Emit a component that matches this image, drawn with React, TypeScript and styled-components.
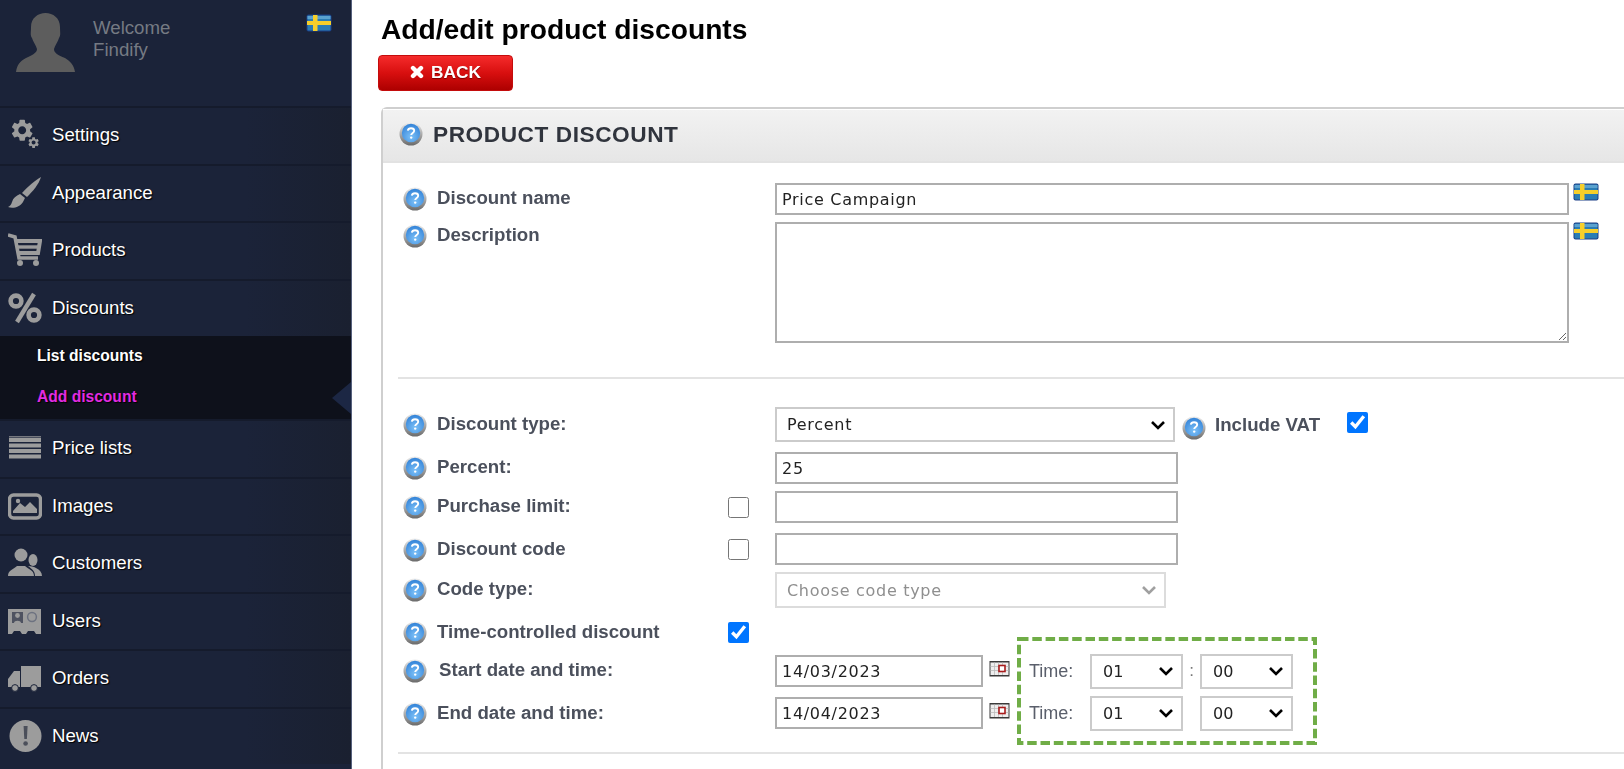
import React from "react";
import styled, { createGlobalStyle } from "styled-components";

const Global = createGlobalStyle`
  html, body { margin: 0; padding: 0; background: #fff; }
  body { font-family: "Liberation Sans", Arial, sans-serif; overflow: hidden; }
`;

const Page = styled.div`
  display: flex;
  width: 1624px;
  height: 769px;
  overflow: hidden;
  filter: blur(0.35px);
`;

const Sidebar = styled.aside`
  flex: 0 0 352px;
  box-sizing: border-box;
  height: 769px;
  background: #1b2339;
  border-right: 1px solid #56607c;
  overflow: hidden;
`;

const UserBox = styled.div`
  display: flex;
  align-items: flex-start;
  height: 106px;
  box-sizing: border-box;
  padding: 13px 19px 0 16px;
`;

const UserText = styled.div`
  margin: 4px 0 0 17px;
  font-size: 18.67px;
  line-height: 22px;
  color: #757a83;
`;

const SideFlag = styled.div`
  margin: 1px 0 0 auto;
  display: flex;
`;

const NavRow = styled.div`
  display: flex;
  align-items: center;
  box-sizing: border-box;
  height: 57.5px;
  padding: 0 0 1px 8px;
  border-top: 2px solid #151b2c;
  background: linear-gradient(90deg, #1b2339 0%, #1b2339 70%, #1a2030 100%);
  color: #fff;
  font-size: 18.67px;
  text-shadow: 1px 1px 1px #000;
`;

const NavIcon = styled.span`
  display: flex;
  flex: 0 0 44px;
  color: #9c9c9c;
`;

const SubMenu = styled.div`
  position: relative;
  box-sizing: border-box;
  height: 83px;
  background: #0e111b;
`;

const SubItem = styled.div<{ $active?: boolean }>`
  height: 41px;
  line-height: 39px;
  padding-left: 37px;
  font-size: 15.6px;
  font-weight: 700;
  color: ${(p) => (p.$active ? "#e22be2" : "#fff")};
  text-shadow: 1px 1px 1px #000;
`;

const ActiveArrow = styled.span`
  position: absolute;
  right: 0;
  top: 46px;
  width: 0;
  height: 0;
  border-top: 16px solid transparent;
  border-bottom: 16px solid transparent;
  border-right: 19px solid #1c2744;
`;

const Main = styled.main`
  flex: 1;
  min-width: 0;
  padding-left: 29px;
  overflow: hidden;
`;

const Title = styled.h1`
  margin: 0;
  height: 55px;
  box-sizing: border-box;
  padding-top: 13px;
  font-size: 28.2px;
  line-height: 32px;
  font-weight: 700;
  color: #000;
`;

const BackButton = styled.button`
  display: flex;
  align-items: center;
  justify-content: center;
  gap: 7px;
  width: 135px;
  height: 36px;
  margin: 0 0 16px -3px;
  padding: 0 0 2px;
  border: 1px solid #c40c0c;
  border-radius: 4px;
  background: linear-gradient(180deg, #f52b2b 0%, #d80f0f 50%, #ad0000 100%);
  color: #fff;
  font-family: inherit;
  font-size: 17.3px;
  font-weight: 700;
  text-shadow: 0 1px 1px #7a0000;
`;

const Panel = styled.section`
  width: 1400px;
  box-sizing: border-box;
  border: 2px solid #cfcfcf;
  border-right: 0;
  border-radius: 6px 0 0 0;
  height: 760px;
`;

const PanelHead = styled.div`
  display: flex;
  align-items: center;
  gap: 10px;
  box-sizing: border-box;
  height: 54px;
  padding: 0 0 3px 16px;
  border-top: 1px solid #fff;
  border-bottom: 2px solid #e2e2e2;
  background: linear-gradient(180deg, #f2f2f2 0%, #e6e6e6 100%);
`;

const PanelTitle = styled.h2`
  margin: 0;
  font-size: 22.67px;
  font-weight: 700;
  letter-spacing: 0.55px;
  color: #30343d;
`;

const PanelBody = styled.div`
  padding: 20px 0 0 20px;
`;

const Row = styled.div<{ $top?: number; $h: number }>`
  display: grid;
  grid-template-columns: 325px 47px 1fr;
  height: ${(p) => p.$h}px;
  margin-top: ${(p) => p.$top ?? 0}px;
`;

const LabelCell = styled.div<{ $top: number }>`
  display: flex;
  align-items: flex-start;
  gap: 10px;
  padding-top: ${(p) => p.$top}px;
`;

const Label = styled.span<{ $nudge?: number }>`
  margin-left: ${(p) => p.$nudge ?? 0}px;
  font-size: 18.67px;
  line-height: 22px;
  font-weight: 700;
  color: #4b505c;
`;

const Check = styled.input.attrs({ type: "checkbox" })<{ $top?: number }>`
  width: 21px;
  height: 21px;
  margin: ${(p) => p.$top ?? 0}px 0 0 0;
  accent-color: #0075ff;
`;

const Field = styled.div`
  display: flex;
  align-items: flex-start;
`;

const TextInput = styled.input.attrs({ type: "text" })<{ $w: number }>`
  box-sizing: border-box;
  width: ${(p) => p.$w}px;
  height: 32px;
  padding: 0 5px;
  border: 2px solid #aeaeae;
  border-radius: 0;
  outline: none;
  background: #fff;
  color: #222;
  font-family: "DejaVu Sans", Verdana, sans-serif;
  font-size: 16px;
  letter-spacing: 0.7px;
`;

const TextArea = styled.textarea`
  box-sizing: border-box;
  width: 794px;
  height: 121px;
  border: 2px solid #aeaeae;
  border-radius: 0;
  outline: none;
  background: #fff;
`;

const chevron = (c: string) =>
  `url("data:image/svg+xml,%3Csvg xmlns='http://www.w3.org/2000/svg' width='16' height='10'%3E%3Cpath d='M2 2l6 6 6-6' fill='none' stroke='${c}' stroke-width='2.6'/%3E%3C/svg%3E")`;

const Select = styled.select<{ $w: number; $h: number; $pad: number; $off?: boolean; $track?: number }>`
  appearance: none;
  box-sizing: border-box;
  flex: none;
  width: ${(p) => p.$w}px;
  height: ${(p) => p.$h}px;
  padding: 0 0 0 ${(p) => p.$pad}px;
  border: 2px solid ${(p) => (p.$off ? "#dcdcdc" : "#cbcbcb")};
  border-radius: 0;
  background: #fff ${(p) => chevron(p.$off ? "%23a0a0a0" : "%23000")} no-repeat right 7px center;
  color: ${(p) => (p.$off ? "#8f8f8f" : "#222")};
  opacity: 1;
  font-family: "DejaVu Sans", Verdana, sans-serif;
  font-size: 16px;
  letter-spacing: ${(p) => p.$track ?? 0}px;
`;

const FlagSlot = styled.span`
  display: flex;
  margin-left: 4px;
`;

const VatHelp = styled.span`
  display: flex;
  margin: 9px 9px 0 7px;
`;

const VatLabel = styled(Label)`
  margin-top: 7px;
  width: 132px;
`;

const Divider = styled.hr<{ $top: number }>`
  width: 1230px;
  height: 2px;
  margin: ${(p) => p.$top}px 0 0 -5px;
  border: 0;
  background: #e3e3e3;
`;

const TimeGroup = styled.div`
  position: relative;
  margin-top: 10px;
`;

const TimeRow = styled.div`
  display: flex;
  align-items: center;
  height: 32px;
`;

const CalendarIcon = styled.span`
  display: flex;
  align-self: flex-start;
  margin: 5px 0 0 6px;
`;

const TimeLabel = styled.span`
  flex: 0 0 61px;
  margin-left: 19px;
  font-size: 18px;
  color: #5a5f6b;
`;

const Colon = styled.span`
  flex: 0 0 17px;
  text-align: center;
  font-size: 17px;
  color: #777;
`;

const Annotation = styled.svg`
  position: absolute;
  left: 614px;
  top: -18px;
  pointer-events: none;
`;

const Gray = "currentColor";

const Flag = () => (
  <svg width="26" height="18" viewBox="0 0 26 18">
    <rect x="0.5" y="0.5" width="25" height="17" rx="2" fill="#1c3f86" />
    <rect x="1.5" y="1.5" width="23" height="15" rx="1" fill="#2a7db4" />
    <rect x="1.5" y="2" width="23" height="3" fill="#5aa2cf" />
    <rect x="7" y="1" width="4.5" height="16" fill="#f6cf2a" />
    <rect x="1" y="7" width="24" height="4" fill="#f6cf2a" />
  </svg>
);

const Help = () => (
  <svg width="24" height="24" viewBox="0 0 24 24" style={{ flex: "none" }}>
    <defs>
      <linearGradient id="rim" x1="0" y1="0" x2="0" y2="1">
        <stop offset="0" stopColor="#eeeeee" />
        <stop offset="1" stopColor="#6a6a6a" />
      </linearGradient>
      <radialGradient id="ball" cx="0.5" cy="0.7" r="0.75">
        <stop offset="0" stopColor="#7cc0f7" />
        <stop offset="1" stopColor="#2e7fd6" />
      </radialGradient>
    </defs>
    <circle cx="12" cy="12" r="11.5" fill="url(#rim)" />
    <circle cx="12" cy="11" r="9.2" fill="url(#ball)" />
    <path d="M8.8 8.6c.3-1.6 1.6-2.3 3.2-2.3 1.8 0 3.2 1 3.2 2.5 0 2.2-3 2.2-3 4.3" fill="none" stroke="#fff" strokeWidth="1.9" />
    <circle cx="12.2" cy="15.6" r="1.2" fill="#fff" />
  </svg>
);

const Calendar = () => (
  <svg width="21" height="17" viewBox="0 0 21 17">
    <rect x="0.5" y="1" width="20" height="15.5" fill="#3a3a3a" />
    <rect x="1.5" y="2.5" width="18" height="12.5" fill="#eee" />
    <path d="M5.5 2.5v12.5M9.5 2.5v12.5M13.5 2.5v12.5M1.5 6.5h18M1.5 10.5h18" stroke="#bbb" strokeWidth="0.8" />
    <rect x="10" y="5.5" width="6" height="6" fill="#fff" stroke="#a81c1c" strokeWidth="1.6" />
  </svg>
);

const Avatar = () => (
  <svg width="60" height="60" viewBox="0 0 60 60">
    <path
      d="M29.5 0C22 0 15 5 15 14c0 6-1 8 1 11 1 4 4 7 5 11 0 4-5 6-11 9-6 3-9 7-10 14h59c-1-7-5-11-10-14-7-3-11-5-11-9 1-4 4-7 5-11 2-3 1-5 1-11C44 5 37 0 29.5 0Z"
      fill="#5d5d5d"
    />
  </svg>
);

const GEAR =
  "M19.14 12.94c.04-.3.06-.61.06-.94 0-.32-.02-.64-.07-.94l2.03-1.58c.18-.14.23-.41.12-.61l-1.92-3.32c-.12-.22-.37-.29-.59-.22l-2.39.96c-.5-.38-1.03-.7-1.62-.94l-.36-2.54c-.04-.24-.24-.41-.48-.41h-3.84c-.24 0-.43.17-.47.41l-.36 2.54c-.59.24-1.13.57-1.62.94l-2.39-.96c-.22-.08-.47 0-.59.22L2.74 8.87c-.12.21-.08.47.12.61l2.03 1.58c-.05.3-.09.63-.09.94s.02.64.07.94l-2.03 1.58c-.18.14-.23.41-.12.61l1.92 3.32c.12.22.37.29.59.22l2.39-.96c.5.38 1.03.7 1.62.94l.36 2.54c.05.24.24.41.48.41h3.84c.24 0 .44-.17.47-.41l.36-2.54c.59-.24 1.13-.56 1.62-.94l2.39.96c.22.08.47 0 .59-.22l1.92-3.32c.12-.22.07-.47-.12-.61l-2.01-1.58zM12 15.6c-1.98 0-3.6-1.62-3.6-3.6s1.62-3.6 3.6-3.6 3.6 1.62 3.6 3.6-1.62 3.6-3.6 3.6z";

const Svg34 = ({ children }: { children: React.ReactNode }) => (
  <svg width="34" height="34" viewBox="0 0 34 34">{children}</svg>
);

const icons: Record<string, React.ReactNode> = {
  settings: (
    <Svg34>
      <path d={GEAR} transform="translate(1 -1) scale(1.1)" fill={Gray} />
      <path d={GEAR} transform="translate(19 18) scale(.55)" fill={Gray} />
    </Svg34>
  ),
  brush: (
    <Svg34>
      <path d="M33 1C28 4 20 10 14 17l5 4C25 15 31 8 33 1Z" fill={Gray} />
      <path d="M12 18c-4 2-7 4-8 8-1 3-2 4-4 5 5 2 12 0 15-5 1-2 2-4 2-4Z" fill={Gray} />
    </Svg34>
  ),
  cart: (
    <Svg34>
      <path d="M0 2l7 2 4 21h19" fill="none" stroke={Gray} strokeWidth="3.6" />
      <path d="M8 8h24l-2 12H10" fill="none" stroke={Gray} strokeWidth="4" />
      <path d="M10 14h20" stroke={Gray} strokeWidth="3.4" />
      <circle cx="12" cy="30" r="3" fill={Gray} />
      <circle cx="28" cy="30" r="3" fill={Gray} />
    </Svg34>
  ),
  percent: (
    <Svg34>
      <circle cx="8" cy="10" r="5.4" fill="none" stroke={Gray} strokeWidth="4.6" />
      <circle cx="26" cy="24" r="5.4" fill="none" stroke={Gray} strokeWidth="4.6" />
      <path d="M26 3L9 31" stroke={Gray} strokeWidth="4.4" />
    </Svg34>
  ),
  lines: (
    <Svg34>
      <path d="M1 7h32v4H1zM1 12.5h32v4H1zM1 18h32v4H1zM1 23.5h32v4H1z" fill={Gray} />
      <path d="M1 5h32v1.5H1z" fill={Gray} opacity=".7" />
    </Svg34>
  ),
  images: (
    <Svg34>
      <rect x="1.5" y="6" width="31" height="23" rx="4" fill="none" stroke={Gray} strokeWidth="3.4" />
      <path d="M5 22l7-8 5 4 5-5 7 7v4H5Z" fill={Gray} />
      <circle cx="10" cy="12" r="2.2" fill={Gray} />
    </Svg34>
  ),
  customers: (
    <Svg34>
      <circle cx="13" cy="9" r="6.5" fill={Gray} />
      <path d="M0 30c0-6 6-7 9-10h8c3 3 9 4 9 10Z" fill={Gray} />
      <ellipse cx="25" cy="14" rx="4.5" ry="6" fill={Gray} />
      <path d="M20 20c5 0 14 3 14 10h-7c0-5-3-7-7-10Z" fill={Gray} />
    </Svg34>
  ),
  users: (
    <Svg34>
      <path d="M0 5h33v25h-5l-2-3h-6l-2 3h-4l-2-3H6l-2 3H0Z" fill={Gray} />
      <rect x="4" y="8" width="11" height="11" fill="#4e5260" />
      <circle cx="9.5" cy="11.5" r="2.4" fill={Gray} />
      <path d="M6 19c0-3 7-3 7 0Z" fill={Gray} />
      <circle cx="24" cy="13" r="4.4" fill="none" stroke="#6d7280" strokeWidth="1.5" />
    </Svg34>
  ),
  orders: (
    <Svg34>
      <path d="M13 5h20v21H13Z" fill={Gray} />
      <path d="M12 10H6L0 18v8h12Z" fill={Gray} />
      <circle cx="7" cy="27" r="3.4" fill={Gray} stroke="#1b2339" strokeWidth="1" />
      <circle cx="26" cy="27" r="3.4" fill={Gray} stroke="#1b2339" strokeWidth="1" />
    </Svg34>
  ),
  news: (
    <Svg34>
      <circle cx="17.5" cy="17" r="16" fill={Gray} />
      <path d="M15.6 7h4l-.7 13h-2.6Z" fill="#4b4f5a" />
      <circle cx="17.6" cy="24.5" r="2.3" fill="#4b4f5a" />
    </Svg34>
  ),
};

const BackX = () => (
  <svg width="14" height="14" viewBox="0 0 14 14">
    <path d="M3 3l8 8M11 3l-8 8" stroke="#fff" strokeWidth="4.4" strokeLinecap="round" />
  </svg>
);

const before = [
  ["settings", "Settings"],
  ["brush", "Appearance"],
  ["cart", "Products"],
  ["percent", "Discounts"],
];
const after = [
  ["lines", "Price lists"],
  ["images", "Images"],
  ["customers", "Customers"],
  ["users", "Users"],
  ["orders", "Orders"],
  ["news", "News"],
];

const Nav = ({ items }: { items: string[][] }) => (
  <>
    {items.map(([icon, label]) => (
      <NavRow key={label}>
        <NavIcon>{icons[icon]}</NavIcon>
        {label}
      </NavRow>
    ))}
  </>
);

const Hours = ({ value }: { value: string }) => (
  <Select $w={93} $h={35} $pad={11} defaultValue={value}>
    <option value={value}>{value}</option>
  </Select>
);

const FormLabel = ({ top, text, nudge }: { top: number; text: string; nudge?: number }) => (
  <LabelCell $top={top}>
    <Help />
    <Label $nudge={nudge}>{text}</Label>
  </LabelCell>
);

export default function App() {
  return (
    <Page>
      <Global />
      <Sidebar>
        <UserBox>
          <Avatar />
          <UserText>
            Welcome
            <br />
            Findify
          </UserText>
          <SideFlag>
            <Flag />
          </SideFlag>
        </UserBox>
        <Nav items={before} />
        <SubMenu>
          <SubItem>List discounts</SubItem>
          <SubItem $active>Add discount</SubItem>
          <ActiveArrow />
        </SubMenu>
        <Nav items={after} />
      </Sidebar>
      <Main>
        <Title>Add/edit product discounts</Title>
        <BackButton>
          <BackX />
          BACK
        </BackButton>
        <Panel>
          <PanelHead>
            <Help />
            <PanelTitle>PRODUCT DISCOUNT</PanelTitle>
          </PanelHead>
          <PanelBody>
            <Row $h={32}>
              <FormLabel top={4} text="Discount name" />
              <span />
              <Field>
                <TextInput $w={794} defaultValue="Price Campaign" />
                <FlagSlot>
                  <Flag />
                </FlagSlot>
              </Field>
            </Row>
            <Row $h={121} $top={7}>
              <FormLabel top={2} text="Description" />
              <span />
              <Field>
                <TextArea />
                <FlagSlot>
                  <Flag />
                </FlagSlot>
              </Field>
            </Row>
            <Divider $top={34} />
            <Row $h={35} $top={28}>
              <FormLabel top={6} text="Discount type:" />
              <span />
              <Field>
                <Select $w={400} $h={35} $pad={10} $track={0.7} defaultValue="Percent">
                  <option>Percent</option>
                </Select>
                <VatHelp>
                  <Help />
                </VatHelp>
                <VatLabel>Include VAT</VatLabel>
                <Check $top={5} defaultChecked />
              </Field>
            </Row>
            <Row $h={32} $top={10}>
              <FormLabel top={4} text="Percent:" />
              <span />
              <TextInput $w={403} defaultValue="25" />
            </Row>
            <Row $h={32} $top={7}>
              <FormLabel top={4} text="Purchase limit:" />
              <Check $top={6} />
              <TextInput $w={403} />
            </Row>
            <Row $h={32} $top={10}>
              <FormLabel top={5} text="Discount code" />
              <Check $top={6} />
              <TextInput $w={403} />
            </Row>
            <Row $h={36} $top={7}>
              <FormLabel top={6} text="Code type:" />
              <span />
              <Select $w={391} $h={36} $pad={10} $track={0.7} $off disabled defaultValue="c">
                <option value="c">Choose code type</option>
              </Select>
            </Row>
            <Row $h={24} $top={13}>
              <FormLabel top={0} text="Time-controlled discount" />
              <Check $top={1} defaultChecked />
              <span />
            </Row>
            <TimeGroup>
              <Row $h={32}>
                <FormLabel top={4} text="Start date and time:" nudge={2} />
                <span />
                <TimeRow>
                  <TextInput $w={208} defaultValue="14/03/2023" />
                  <CalendarIcon>
                    <Calendar />
                  </CalendarIcon>
                  <TimeLabel>Time:</TimeLabel>
                  <Hours value="01" />
                  <Colon>:</Colon>
                  <Hours value="00" />
                </TimeRow>
              </Row>
              <Row $h={32} $top={10}>
                <FormLabel top={5} text="End date and time:" />
                <span />
                <TimeRow>
                  <TextInput $w={208} defaultValue="14/04/2023" />
                  <CalendarIcon>
                    <Calendar />
                  </CalendarIcon>
                  <TimeLabel>Time:</TimeLabel>
                  <Hours value="01" />
                  <Colon />
                  <Hours value="00" />
                </TimeRow>
              </Row>
              <Annotation width="300" height="108" viewBox="0 0 300 108">
                <rect x="2" y="2" width="296" height="104" fill="none" stroke="#70ad47" strokeWidth="4" strokeDasharray="9.5 3.8" />
              </Annotation>
            </TimeGroup>
            <Divider $top={23} />
          </PanelBody>
        </Panel>
      </Main>
    </Page>
  );
}
